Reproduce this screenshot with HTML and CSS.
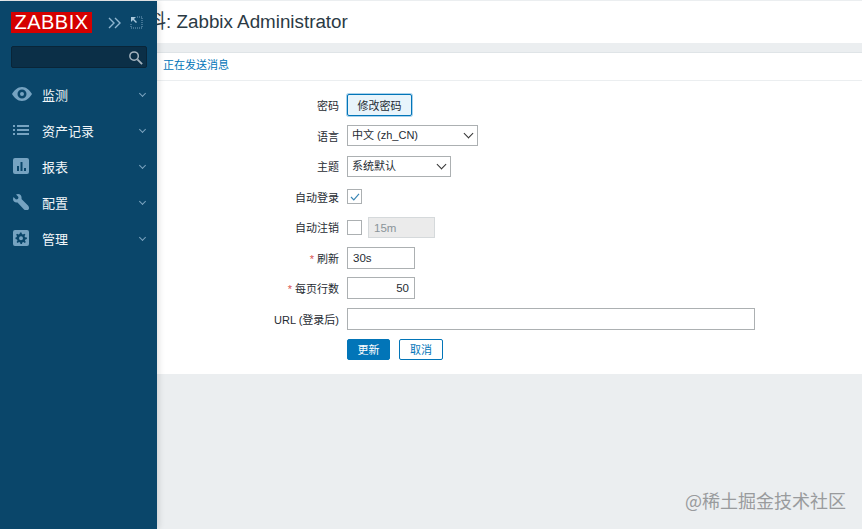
FILE: index.html
```html
<!DOCTYPE html>

<html>

<head>
  <meta charset="utf-8">
  <title>用户资料</title>
  <link rel="stylesheet" href="styles.css">
</head>

<body>

  <div class="sidebar">
    <div class="brand">
      <span class="logo">ZABBIX</span>
      <svg class="brand-icon" width="14" height="12" viewBox="0 0 14 12"><path d="M1 1l5 5-5 5M7 1l5 5-5 5" fill="none" stroke="#8fb6d0" stroke-width="1.4"/></svg>
      <svg class="brand-icon" width="13" height="13" viewBox="0 0 13 13"><path d="M7 1h5v11H1V7" fill="none" stroke="#7ba3bf" stroke-width="1" stroke-dasharray="1 1"/><path d="M1 1h5L4 3l3 3-1 1-3-3-2 2z" fill="#a9c8dc"/></svg>
    </div>
    <div class="search">
      <svg width="15" height="15" viewBox="0 0 16 16"><circle cx="6.5" cy="6.5" r="4.5" fill="none" stroke="#a5b4bf" stroke-width="1.6"/><path d="M10 10l5 5" stroke="#a5b4bf" stroke-width="2"/></svg>
    </div>
    <ul class="menu">
      <li>
        <svg width="20" height="14" viewBox="0 0 20 14"><path fill-rule="evenodd" d="M10 0c4.500 0 8 3.500 10 7-2 3.500-5.500 7-10 7S2 10.500 0 7c2-3.500 5.500-7 10-7zm0 2.500a4.500 4.500 0 1 0 0 9 4.500 4.500 0 0 0 0-9zM10 5a2 2 0 1 1 0 4 2 2 0 0 1 0-4z" fill="#76a3c1"/></svg>
        <span>监测</span><i class="chevron"></i>
      </li>
      <li>
        <svg width="16" height="10" viewBox="0 0 16 10"><path d="M0 0h2v2H0zM4 0h12v2H4zM0 4h2v2H0zM4 4h12v2H4zM0 8h2v2H0zM4 8h12v2H4z" fill="#76a3c1"/></svg>
        <span>资产记录</span><i class="chevron"></i>
      </li>
      <li>
        <svg width="16" height="16" viewBox="0 0 16 16"><path fill-rule="evenodd" d="M2 0h12a2 2 0 0 1 2 2v12a2 2 0 0 1-2 2H2a2 2 0 0 1-2-2V2a2 2 0 0 1 2-2zm2 8v5h2V8zm3.500-4v9h2V4zM11 10v3h2v-3z" fill="#76a3c1"/></svg>
        <span>报表</span><i class="chevron"></i>
      </li>
      <li>
        <svg width="16" height="16" viewBox="0 0 16 16"><path d="M5 0L3 .5l2.500 2.500-.5 2-2 .5L.5 3 0 5c0 2.500 2 4 4.500 3.500l6.500 7c1 1 3.500 1.200 4.500 0 1-1 .5-3-.5-4L8.500 5C9 2 7.500 0 5 0z" fill="#76a3c1"/></svg>
        <span>配置</span><i class="chevron"></i>
      </li>
      <li>
        <svg width="16" height="16" viewBox="0 0 16 16"><path fill-rule="evenodd" d="M2 0h12a2 2 0 0 1 2 2v12a2 2 0 0 1-2 2H2a2 2 0 0 1-2-2V2a2 2 0 0 1 2-2zm5 2.500l-.4 1.600-1.100.5-1.400-.9-1 1 .9 1.400-.5 1.100L2.500 7.600v1.400l1.500.4.500 1.100-.9 1.400 1 1 1.400-.9 1.100.5.400 1.400h1.400l.4-1.400 1.100-.5 1.400.9 1-1-.9-1.400.5-1.100 1.500-.4V7.600L12 7.200l-.5-1.100.9-1.400-1-1-1.400.9-1.100-.5L8.500 2.500zM8 6.300a2 2 0 1 1 0 4 2 2 0 0 1 0-4z" fill="#76a3c1"/></svg>
        <span>管理</span><i class="chevron"></i>
      </li>
    </ul>
  </div>

  <div class="main">
    <div class="header">
      <h1>用户资料: Zabbix Administrator</h1>
    </div>

    <div class="panel">
      <div class="tabs"><a href="#">正在发送消息</a></div>

      <form class="form">
        <label>密码</label>
        <div><button type="button" class="btn-change">修改密码</button></div>

        <label>语言</label>
        <div class="select select-lang">中文 (zh_CN)<i class="arrow"></i></div>

        <label>主题</label>
        <div class="select select-theme">系统默认<i class="arrow"></i></div>

        <label>自动登录</label>
        <div>
          <span class="check">
            <svg width="10" height="8" viewBox="0 0 12 10"><path d="M1 5l3.500 3.500L11 1" fill="none" stroke="#3b87b5" stroke-width="1.500"/></svg>
          </span>
        </div>

        <label>自动注销</label>
        <div class="inline">
          <span class="check"></span>
          <span class="field field-off">15m</span>
        </div>

        <label><em>*</em> 刷新</label>
        <div><span class="field field-short">30s</span></div>

        <label><em>*</em> 每页行数</label>
        <div><span class="field field-short field-num">50</span></div>

        <label>URL (登录后)</label>
        <div><span class="field field-url"></span></div>

        <span></span>
        <div class="inline actions">
          <button type="button" class="btn-primary">更新</button>
          <button type="button" class="btn-cancel">取消</button>
        </div>
      </form>
    </div>

    <div class="watermark">@稀土掘金技术社区</div>
  </div>

</body>

</html>
```

FILE: styles.css
```css
* {
  box-sizing: border-box;
}

html,
body {
  height: 100%;
}

body {
  margin: 0;
  background: #EBEEF0;
  color: #1F2C33;
  font-size: 11px;
  font-family: "Liberation Sans", Arial, "Noto Sans CJK SC", sans-serif;
  overflow: hidden;
}

/* sidebar lies over the page, the title runs under it */
.sidebar {
  position: absolute;
  top: 1px;
  left: 0;
  bottom: 0;
  width: 157px;
  background: #0A466A;
  box-shadow: 2px 0 6px rgba(0, 0, 0, 0.12);
  color: #F2F6F9;
}

.brand {
  display: flex;
  align-items: center;
  height: 21px;
  margin: 11px 0 13px 11px;
}

.logo {
  width: 81px;
  height: 21px;
  background: #D40000;
  color: #FFF;
  font-size: 20px;
  line-height: 21px;
  letter-spacing: 0.5px;
  text-align: center;
}

.brand-icon:first-of-type {
  margin-left: 16px;
}

.brand-icon + .brand-icon {
  margin-left: 8px;
}

.search {
  display: flex;
  align-items: center;
  justify-content: flex-end;
  width: 136px;
  height: 22px;
  margin-left: 11px;
  padding-right: 3px;
  background: #0B2F47;
  border: 1px solid #092538;
  border-radius: 2px;
}

.menu {
  list-style: none;
  margin: 8px 0 0;
  padding: 0;
}

.menu li {
  display: flex;
  align-items: center;
  height: 36px;
  font-size: 13px;
  position: relative;
}

.menu svg {
  position: absolute;
  left: 13px;
}

.menu li:first-child svg {
  left: 12px;
}

.menu span {
  margin-left: 42px;
}

.chevron {
  position: absolute;
  right: 12px;
  top: 15px;
  width: 5px;
  height: 5px;
  border-right: 1px solid #7BA3BF;
  border-bottom: 1px solid #7BA3BF;
  transform: rotate(45deg);
}

.header {
  height: 42px;
  margin-top: 1px;
  padding-left: 91px;
  background: #FFF;
}

h1 {
  margin: 0;
  color: #2B3A44;
  font-size: 18.800px;
  font-weight: normal;
  line-height: 42px;
  white-space: nowrap;
}

.panel {
  margin-top: 9px;
  height: 322px;
  background: #FFF;
  border-top: 1px solid #DFE4E7;
}

.tabs {
  height: 28px;
  padding: 3px 0 0 163px;
  border-bottom: 1px solid #EBEEF0;
}

.tabs a {
  color: #0275B8;
  text-decoration: none;
}

.form {
  display: grid;
  grid-template-columns: 339px 1fr;
  column-gap: 8px;
  grid-auto-rows: 30.500px;
  align-items: center;
  padding-top: 9px;
}

.form label {
  text-align: right;
}

.form em {
  color: #D9534F;
  font-style: normal;
}

.inline {
  display: flex;
  align-items: center;
}

button {
  font: inherit;
  border-radius: 2px;
  cursor: pointer;
  padding: 0;
}

.btn-change {
  width: 65px;
  height: 22px;
  background: #E8F4FB;
  border: 1px solid #0275B8;
  box-shadow: 0 0 0 1px #A9D2EC;
  color: #1F2C33;
}

.select {
  position: relative;
  height: 21px;
  padding-left: 4px;
  border: 1px solid #ACB0B2;
  line-height: 19px;
}

.select-lang {
  width: 131px;
}

.select-theme {
  width: 104px;
}

.arrow {
  position: absolute;
  right: 5px;
  top: 4px;
  width: 7px;
  height: 7px;
  border-right: 1px solid #333;
  border-bottom: 1px solid #333;
  transform: rotate(45deg);
}

.check {
  display: flex;
  align-items: center;
  justify-content: center;
  width: 15px;
  height: 15px;
  border: 1px solid #ACB0B2;
}

.field {
  display: block;
  height: 22px;
  padding: 0 5px;
  border: 1px solid #ACB0B2;
  line-height: 20px;
  font-size: 11.500px;
}

.field-off {
  width: 67px;
  height: 21px;
  margin-left: 6px;
  background: #EBEBEB;
  border-color: #D5D9DB;
  color: #8A9499;
}

.field-short {
  width: 68px;
}

.field-num {
  text-align: right;
}

.field-url {
  width: 408px;
}

.actions {
  gap: 9px;
}

.btn-primary {
  width: 43px;
  height: 21px;
  background: #0275B8;
  border: 1px solid #0275B8;
  color: #FFF;
}

.btn-cancel {
  width: 44px;
  height: 21px;
  background: #FFF;
  border: 1px solid #0275B8;
  color: #0275B8;
}

/* stamped on the screenshot */
.watermark {
  position: absolute;
  right: 16px;
  bottom: 17px;
  color: #999B9D;
  font-size: 18px;
  font-family: "Noto Sans CJK SC", sans-serif;
  line-height: 24px;
}
```
